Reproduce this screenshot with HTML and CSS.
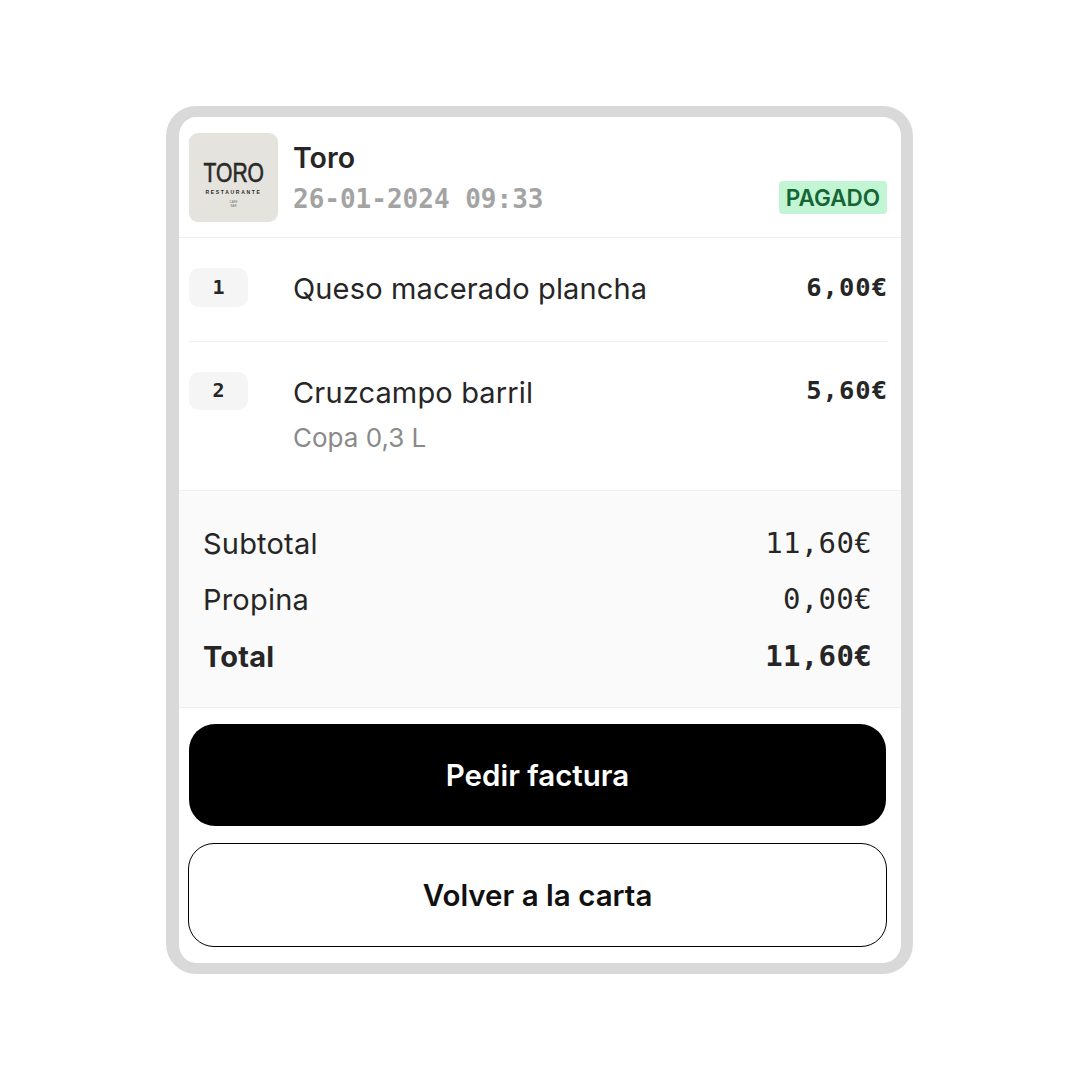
FILE: index.html
```html
<!DOCTYPE html>
<html lang="es">
<head>
<meta charset="utf-8">
<title>Toro</title>
<link rel="stylesheet" href="styles.css">
</head>
<body>
<main class="card">
  <header class="head">
    <div class="logo">
      <span class="logo-name">TORO</span>
      <span class="logo-sub">RESTAURANTE</span>
      <span class="logo-tiny">CAFE<br>BAR</span>
    </div>
    <div class="head-info">
      <h1 class="venue">Toro</h1>
      <div class="head-line">
        <span class="date">26-01-2024 09:33</span>
        <span class="badge">PAGADO</span>
      </div>
    </div>
  </header>
  <section class="items">
    <article class="item item-first">
      <span class="qty">1</span>
      <div class="item-text"><div class="item-name">Queso macerado plancha</div></div>
      <span class="price">6,00€</span>
    </article>
    <article class="item item-second">
      <span class="qty">2</span>
      <div class="item-text">
        <div class="item-name">Cruzcampo barril</div>
        <div class="item-note">Copa 0,3 L</div>
      </div>
      <span class="price">5,60€</span>
    </article>
  </section>
  <section class="totals">
    <div class="total-row"><span>Subtotal</span><span class="amount">11,60€</span></div>
    <div class="total-row"><span>Propina</span><span class="amount">0,00€</span></div>
    <div class="total-row total-strong"><span>Total</span><span class="amount">11,60€</span></div>
  </section>
  <section class="actions">
    <button class="btn btn-dark">Pedir factura</button>
    <button class="btn btn-light">Volver a la carta</button>
  </section>
</main>
</body>
</html>
```
FILE: styles.css
```css
* { box-sizing: border-box; }
html, body { margin: 0; background: #fff; }
body {
  width: 1080px;
  height: 1080px;
  padding-top: 106px;
  font-family: "Inter", "Liberation Sans", sans-serif;
  color: #262626;
}
.card {
  width: 747px;
  height: 868px;
  margin-left: 166px;
  border: solid #d9d9d9;
  border-width: 11px 12px 11px 13px;
  border-radius: 30px;
  background: #fff;
  overflow: hidden;
  display: flex;
  flex-direction: column;
}
.head {
  height: 121px;
  padding: 16px 14px 0 10px;
  border-bottom: 1px solid #ededed;
  display: flex;
  gap: 15px;
}
.logo {
  width: 89px;
  height: 89px;
  border-radius: 9px;
  background: #e4e3dd;
  color: #2a2a28;
  display: flex;
  flex-direction: column;
  align-items: center;
  padding-top: 27px;
  font-family: "Liberation Sans", sans-serif;
}
.logo-name {
  font-size: 27px;
  line-height: 27px;
  transform: scaleX(0.78);
  -webkit-text-stroke: 0.6px #2a2a28;
}
.logo-sub { font-size: 5px; line-height: 7px; letter-spacing: 1.7px; font-weight: 700; margin-top: 2px; }
.logo-tiny { font-size: 3px; line-height: 4px; text-align: center; color: #777; margin-top: 4px; }
.head-info { flex: 1; display: flex; flex-direction: column; }
.venue {
  margin: 8px 0 0;
  font-size: 28.5px;
  line-height: 34px;
  font-weight: 600;
}
.head-line {
  display: flex;
  justify-content: space-between;
  align-items: flex-start;
  margin-top: 8px;
}
.date {
  font-family: "DejaVu Sans Mono", monospace;
  font-size: 26px;
  line-height: 32px;
  font-weight: 700;
  color: #a3a3a3;
}
.badge {
  width: 108px;
  height: 33px;
  margin-top: -2px;
  border-radius: 4px;
  background: #c2f5d4;
  color: #166534;
  font-size: 22.5px;
  line-height: 33px;
  font-weight: 600;
  text-align: center;
}
.items { padding: 0 13px 0 10px; }
.item { display: flex; align-items: flex-start; }
.item-first { height: 104px; padding-top: 30px; border-bottom: 1px solid #efefef; }
.item-second { height: 148px; padding-top: 30px; }
.qty {
  width: 59px;
  height: 39px;
  flex: none;
  border-radius: 10px;
  background: #f5f5f5;
  font-family: "DejaVu Sans Mono", monospace;
  font-size: 20px;
  line-height: 38px;
  font-weight: 700;
  text-align: center;
}
.item-second .qty { height: 38px; line-height: 37px; }
.item-text { flex: 1; padding-left: 45px; }
.item-name { font-size: 29px; line-height: 42px; letter-spacing: 0.15px; }
.item-note { font-size: 26px; line-height: 30px; margin-top: 9px; color: #8a8a8a; }
.price {
  font-family: "DejaVu Sans Mono", monospace;
  font-size: 25.5px;
  letter-spacing: 1px;
  line-height: 38px;
  font-weight: 700;
}
.item-second .price { margin-top: -1px; }
.totals {
  height: 218px;
  padding: 23.5px 29px 0 24px;
  background: #fafafa;
  border: solid #efefef;
  border-width: 1px 0;
}
.total-row {
  display: flex;
  justify-content: space-between;
  height: 56.5px;
  font-size: 29px;
  line-height: 57px;
  letter-spacing: 0.2px;
}
.amount { font-family: "DejaVu Sans Mono", monospace; font-size: 29px; letter-spacing: 0.35px; }
.total-strong { font-weight: 700; }
.actions {
  padding: 16px 14px 0 9px;
  display: flex;
  flex-direction: column;
  gap: 17px;
}
.btn {
  font-family: inherit;
  font-size: 29.5px;
  font-weight: 600;
  border-radius: 26px;
  cursor: pointer;
}
.btn-dark {
  height: 102px;
  margin: 0 1px;
  background: #000;
  color: #fff;
  border: 0;
}
.btn-light {
  height: 104px;
  background: #fff;
  color: #111;
  border: 1px solid #000;
}
```
